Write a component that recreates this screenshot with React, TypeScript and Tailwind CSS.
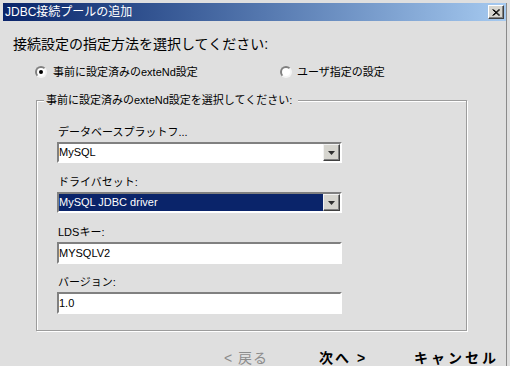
import React from 'react';

const fields = [
  { label: 'データベースプラットフ...', value: 'MySQL', combo: true, selected: false },
  { label: 'ドライバセット:', value: 'MySQL JDBC driver', combo: true, selected: true },
  { label: 'LDSキー:', value: 'MYSQLV2', combo: false, selected: false },
  { label: 'バージョン:', value: '1.0', combo: false, selected: false },
];

function Radio({ checked }: { checked: boolean }) {
  return (
    <span className="w-[12px] h-[12px] rounded-full bg-white border-2 border-[#808080] border-r-[#f4f4f4] border-b-[#f4f4f4] flex items-center justify-center shrink-0">
      {checked && <span className="w-[4px] h-[4px] rounded-full bg-black" />}
    </span>
  );
}

function Field({ value, combo, selected }: { value: string; combo: boolean; selected: boolean }) {
  return (
    <div
      className={`w-[285px] ${combo ? 'h-[21px]' : 'h-[22px]'} border-2 border-[#808080] border-r-white border-b-white flex items-center ${
        selected ? 'bg-[#0a246a] text-white' : 'bg-white text-black'
      }`}
    >
      <span className="text-[11px] leading-none">{value}</span>
      {combo && (
        <span className="ml-auto w-[17px] h-[17px] bg-[#d6d5cf] border border-[#f2f2f2] border-r-[#404040] border-b-[#404040] shadow-[inset_-1px_-1px_0_#808080] flex items-center justify-center">
          <svg width="7" height="4" viewBox="0 0 7 4">
            <polygon points="0,0 7,0 3.5,4" fill="#303030" />
          </svg>
        </span>
      )}
    </div>
  );
}

export default function App() {
  return (
    <div className="w-[510px] h-[366px] overflow-hidden bg-[#dfdfdf] p-[3px] pb-0 font-['Liberation_Sans','Noto_Sans_CJK_JP',sans-serif] text-black">
      <div className="h-full flex flex-col border-r border-[#8a8a8a]">
        {/* title bar */}
        <div className="h-[18px] bg-gradient-to-r from-[#0a246a] to-[#a6caf0] flex items-center pl-[2px] pr-[2px]">
          <span className="text-white text-[12px] leading-none">JDBC接続プールの追加</span>
          <span className="ml-auto w-[16px] h-[14px] bg-[#d6d5cf] border border-white border-r-[#404040] border-b-[#404040] shadow-[inset_-1px_-1px_0_#808080] flex items-center justify-center">
            <svg width="8" height="7" viewBox="0 0 8 7">
              <path d="M0.5 0.5 L7 6.5 M1.5 0.5 L8 6.5 M7 0.5 L0.5 6.5 M8 0.5 L1.5 6.5" stroke="#000" strokeWidth="1" />
            </svg>
          </span>
        </div>

        <div className="mt-[14px] pl-[10px] text-[14px] leading-[18px]">接続設定の指定方法を選択してください:</div>

        <div className="mt-[12px] pl-[32px] h-[14px] flex items-center text-[11px]">
          <label className="w-[245px] flex items-center gap-[6px]">
            <Radio checked />
            <span>事前に設定済みのexteNd設定</span>
          </label>
          <label className="flex items-center gap-[5px]">
            <Radio checked={false} />
            <span>ユーザ指定の設定</span>
          </label>
        </div>

        {/* group box */}
        <div className="relative mt-[21px] ml-[33px] w-[431px] h-[231px] border border-[#9c9c9c] shadow-[inset_1px_1px_0_#fff,1px_1px_0_#fff] pt-[21px] pl-[20px]">
          <span className="absolute left-[7px] top-[-8px] bg-[#dfdfdf] pl-[2px] pr-[6px] text-[11px] leading-[14px]">
            事前に設定済みのexteNd設定を選択してください:
          </span>
          {fields.map((f) => (
            <div key={f.label} className="h-[50px]">
              <div className="h-[20px] leading-[20px] text-[11px] pl-[1px]">{f.label}</div>
              <Field value={f.value} combo={f.combo} selected={f.selected} />
            </div>
          ))}
        </div>

        {/* buttons */}
        <div className="mt-[19px] pl-[221px] flex text-[14px] leading-[16px]">
          <span className="w-[95px] text-[#8c8c8c] tracking-[1px]">&lt; 戻る</span>
          <span className="w-[95px] font-bold tracking-[2px]">次へ &gt;</span>
          <span className="font-bold tracking-[3px]">キャンセル</span>
        </div>
      </div>
    </div>
  );
}
